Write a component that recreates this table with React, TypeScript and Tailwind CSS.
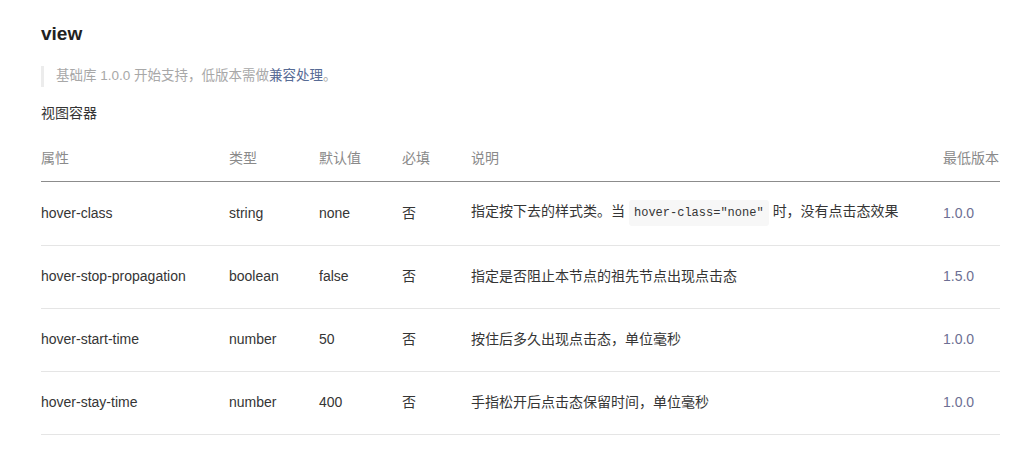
import React from "react";

const rows = [
  { name: "hover-class", type: "string", def: "none", req: "否", desc: "code", ver: "1.0.0" },
  { name: "hover-stop-propagation", type: "boolean", def: "false", req: "否", desc: "指定是否阻止本节点的祖先节点出现点击态", ver: "1.5.0" },
  { name: "hover-start-time", type: "number", def: "50", req: "否", desc: "按住后多久出现点击态，单位毫秒", ver: "1.0.0" },
  { name: "hover-stay-time", type: "number", def: "400", req: "否", desc: "手指松开后点击态保留时间，单位毫秒", ver: "1.0.0" },
];

export default function App() {
  return (
    <div
      className="w-[1014px] h-[455px] bg-white px-[41px] text-[#353535]"
      style={{ fontFamily: '"Liberation Sans", "Noto Sans CJK SC", sans-serif' }}
    >
      <div className="pt-[22px] h-[46px] text-[19px] leading-[24px] font-bold text-[#222]">view</div>
      <div className="mt-[20px] flex h-[21px] items-center border-l-[3px] border-[#ececec] pl-[12px] text-[13.5px] text-[#a8a8a8]">
        基础库 1.0.0 开始支持，低版本需做<span className="text-[#576b95]">兼容处理</span>。
      </div>
      <div className="mt-[16px] h-[20px] text-[14px] leading-[20px] text-[#353535]">视图容器</div>
      <table className="mt-[14px] w-[959px] table-fixed border-collapse text-[14px]">
        <colgroup>
          <col className="w-[188px]" />
          <col className="w-[90px]" />
          <col className="w-[83px]" />
          <col className="w-[69px]" />
          <col className="w-[472px]" />
          <col className="w-[57px]" />
        </colgroup>
        <thead>
          <tr className="h-[44px] border-b border-[#8c8c8c] text-[#8a8a8a]">
            <th className="p-0 text-left font-normal">属性</th>
            <th className="p-0 text-left font-normal">类型</th>
            <th className="p-0 text-left font-normal">默认值</th>
            <th className="p-0 text-left font-normal">必填</th>
            <th className="p-0 text-left font-normal">说明</th>
            <th className="p-0 text-left font-normal whitespace-nowrap">最低版本</th>
          </tr>
        </thead>
        <tbody>
          {rows.map((r, i) => (
            <tr key={r.name} className={`${i === 0 ? "h-[64px]" : "h-[63px]"} border-b border-[#e5e5e5]`}>
              <td className="p-0">{r.name}</td>
              <td className="p-0">{r.type}</td>
              <td className="p-0">{r.def}</td>
              <td className="p-0">{r.req}</td>
              <td className="p-0">
                {r.desc === "code" ? (
                  <span className="whitespace-nowrap">
                    指定按下去的样式类。当
                    <code
                      className="mx-[4px] inline-block h-[26px] rounded-[3px] bg-[#f7f7f7] px-[5px] text-[12px] leading-[26px] text-[#353535]"
                      style={{ fontFamily: '"Liberation Mono", monospace' }}
                    >
                      hover-class="none"
                    </code>
                    时，没有点击态效果
                  </span>
                ) : (
                  r.desc
                )}
              </td>
              <td className="p-0 text-[#6d6f93]">{r.ver}</td>
            </tr>
          ))}
        </tbody>
      </table>
    </div>
  );
}
